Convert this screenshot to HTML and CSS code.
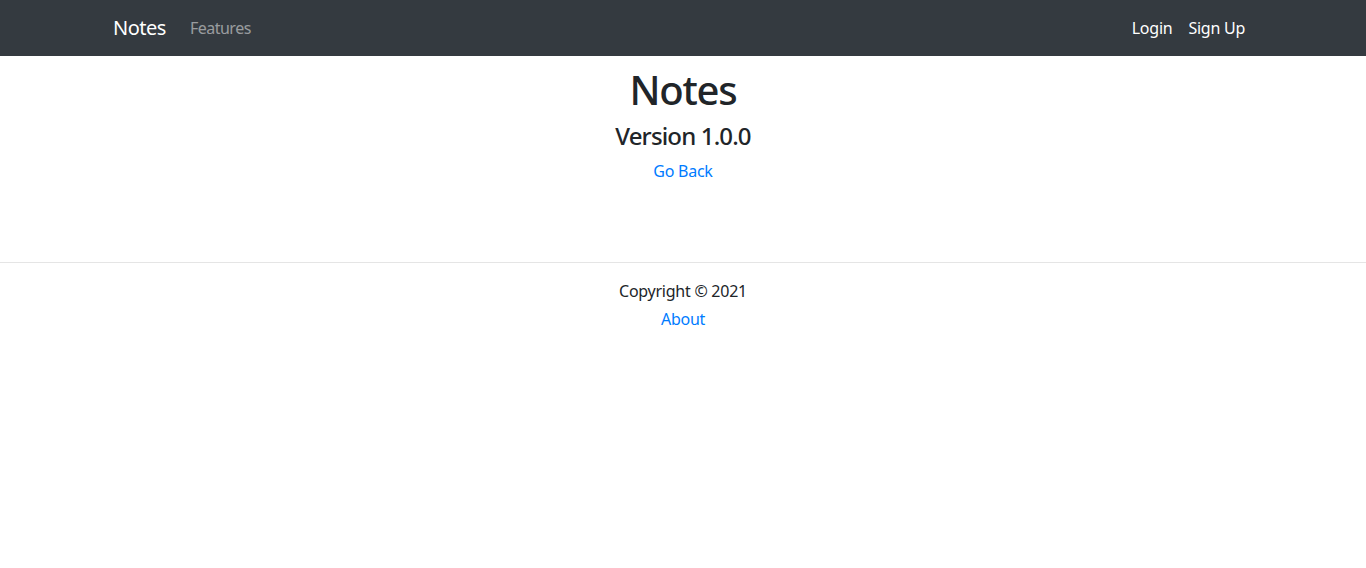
FILE: index.html
```html
<!DOCTYPE html>
<html lang="en">
<head>
<meta charset="utf-8">
<title>Notes</title>
<link rel="stylesheet" href="styles.css">
</head>
<body>
<nav class="navbar">
  <div class="container nav-inner">
    <div class="nav-left">
      <a class="brand" href="#">Notes</a>
      <a class="nav-link muted" href="#">Features</a>
    </div>
    <div class="nav-right">
      <a class="nav-link" href="#">Login</a>
      <a class="nav-link" href="#">Sign Up</a>
    </div>
  </div>
</nav>
<main class="main">
  <h1 class="title">Notes</h1>
  <h4 class="version">Version 1.0.0</h4>
  <a class="link" href="#">Go Back</a>
</main>
<footer class="footer">
  <hr class="rule">
  <p class="copy">Copyright © 2021</p>
  <a class="link" href="#">About</a>
</footer>
</body>
</html>
```
FILE: styles.css
```css
* { box-sizing: border-box; }
html, body { margin: 0; padding: 0; }
body {
  font-family: "Noto Sans", "Open Sans", sans-serif;
  font-size: 16px;
  line-height: 1.5;
  color: #212529;
  background: #fff;
  letter-spacing: -0.25px;
}
a { text-decoration: none; }
.navbar {
  background: #343a40;
  padding: 8px 16px;
}
.container {
  width: 1140px;
  margin: 0 auto;
}
.nav-inner {
  display: flex;
  justify-content: space-between;
  align-items: center;
}
.nav-left, .nav-right { display: flex; align-items: center; }
.brand {
  color: #fff;
  font-size: 20px;
  line-height: 30px;
  padding: 5px 0;
  margin-right: 16px;
  letter-spacing: -0.5px;
}
.nav-link {
  color: #fff;
  padding: 8px;
  line-height: 24px;
}
.nav-link.muted { color: rgba(255,255,255,.5); letter-spacing: -0.5px; }
.main {
  text-align: center;
  padding-top: 10px;
  height: 206px;
}
.title {
  font-size: 40px;
  font-weight: 500;
  line-height: 48px;
  margin: 0 0 8px;
  letter-spacing: -1.2px;
}
.version {
  font-size: 24px;
  font-weight: 500;
  line-height: 28.8px;
  margin: 0 0 8px;
  letter-spacing: -0.85px;
}
.link { color: #007bff; }
.footer { text-align: center; }
.rule {
  border: 0;
  border-top: 1px solid rgba(0,0,0,.1);
  margin: 0 0 16px;
}
.copy { margin: 0 0 4px; }
```
